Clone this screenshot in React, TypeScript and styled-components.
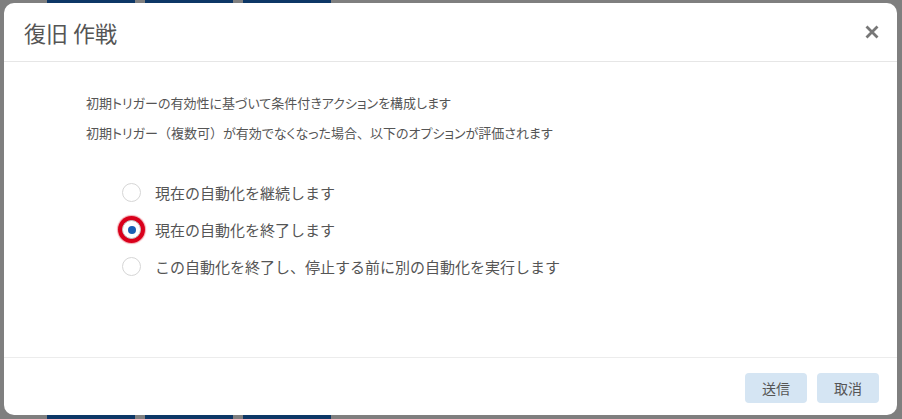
import React from "react";
import styled, { createGlobalStyle } from "styled-components";

const Global = createGlobalStyle`
  html, body { margin: 0; padding: 0; }
  body {
    width: 902px;
    height: 419px;
    overflow: hidden;
    background: #7f7f7f;
    font-family: "Noto Sans CJK JP", "Noto Sans", sans-serif;
  }
`;

const Backdrop = styled.div`
  position: relative;
  width: 902px;
  height: 419px;
  background: #7f7f7f;
  overflow: hidden;
`;

const PageStrip = styled.div<{ $top: boolean }>`
  position: absolute;
  left: 47px;
  ${(p) => (p.$top ? "top: 0;" : "bottom: 0;")}
  display: flex;
  gap: 10px;
`;

const PageButton = styled.div`
  width: 88px;
  height: 40px;
  background: #0d3766;
  margin-top: -36px;
  margin-bottom: -36px;
`;

const Modal = styled.div`
  position: absolute;
  left: 4px;
  top: 3px;
  width: 893px;
  height: 412px;
  background: #fff;
  border-radius: 10px;
  display: flex;
  flex-direction: column;
  overflow: hidden;
`;

const Header = styled.div`
  box-sizing: border-box;
  height: 59px;
  flex: none;
  display: flex;
  align-items: center;
  justify-content: space-between;
  padding: 0 15px 0 20px;
  border-bottom: 1px solid #e6e6e6;
`;

const Title = styled.h2`
  margin: 0;
  font-size: 22px;
  font-weight: 400;
  color: #555;
  letter-spacing: 0;
`;

const Close = styled.button`
  border: 0;
  background: none;
  padding: 0;
  width: 20px;
  height: 20px;
  display: flex;
  align-items: center;
  justify-content: center;
  cursor: pointer;
`;

const Body = styled.div`
  flex: 1;
  padding: 26px 0 0 82px;
  color: #555;
`;

const Desc = styled.p`
  margin: 0;
  font-size: 13px;
  line-height: 30px;
  font-feature-settings: "palt";
`;

const Wide = styled.span`
  font-feature-settings: normal;
`;

const RadioGroup = styled.div`
  margin-top: 35px;
  padding-left: 36px;
  display: flex;
  flex-direction: column;
  gap: 18px;
`;

const Option = styled.label`
  display: flex;
  align-items: center;
  gap: 14px;
  font-size: 15px;
  line-height: 19px;
  color: #555;
`;

const Radio = styled.span<{ $checked: boolean }>`
  position: relative;
  width: 19px;
  height: 19px;
  box-sizing: border-box;
  border-radius: 50%;
  border: 1px solid #d6d6d6;
  background: #fff;
  flex: none;
  ${(p) =>
    p.$checked &&
    `
    box-shadow: 0 0 0 4px #d9001b, 0 0 1px 5px rgba(217, 0, 27, 0.35);
    border-color: #c4c4c4;
    &::after {
      content: "";
      position: absolute;
      left: 50%;
      top: 50%;
      width: 8px;
      height: 8px;
      margin: -4px 0 0 -4px;
      border-radius: 50%;
      background: #1a5fb4;
    }
  `}
`;

const Footer = styled.div`
  box-sizing: border-box;
  height: 58px;
  flex: none;
  border-top: 1px solid #ececec;
  display: flex;
  justify-content: flex-end;
  align-items: flex-start;
  gap: 10px;
  padding: 15px 18px 0 0;
`;

const Button = styled.button`
  height: 30px;
  min-width: 62px;
  padding: 0 14px;
  border: 0;
  border-radius: 4px;
  background: #d5e5f3;
  color: #555;
  font-family: "Noto Sans CJK JP", sans-serif;
  font-size: 14px;
  cursor: pointer;
`;

const options = [
  "現在の自動化を継続します",
  "現在の自動化を終了します",
  "この自動化を終了し、停止する前に別の自動化を実行します",
];

export default function App() {
  return (
    <Backdrop>
      <Global />
      <PageStrip $top>
        <PageButton />
        <PageButton />
        <PageButton />
      </PageStrip>
      <PageStrip $top={false}>
        <PageButton />
        <PageButton />
        <PageButton />
      </PageStrip>
      <Modal>
        <Header>
          <Title>復旧 作戦</Title>
          <Close aria-label="close">
            <svg width="14" height="14" viewBox="0 0 14 14">
              <path d="M1.5 1.5 L12.5 12.5 M12.5 1.5 L1.5 12.5" stroke="#777" strokeWidth="2.8" strokeLinecap="butt" />
            </svg>
          </Close>
        </Header>
        <Body>
          <Desc>初期トリガーの有効性に基づいて条件付きアクションを構成します</Desc>
          <Desc>
            初期トリガー<Wide>（</Wide>複数可<Wide>）</Wide>が有効でなくなった場合<Wide>、</Wide>以下のオプションが評価されます
          </Desc>
          <RadioGroup>
            {options.map((o, i) => (
              <Option key={o}>
                <Radio $checked={i === 1} />
                {o}
              </Option>
            ))}
          </RadioGroup>
        </Body>
        <Footer>
          <Button>送信</Button>
          <Button>取消</Button>
        </Footer>
      </Modal>
    </Backdrop>
  );
}
